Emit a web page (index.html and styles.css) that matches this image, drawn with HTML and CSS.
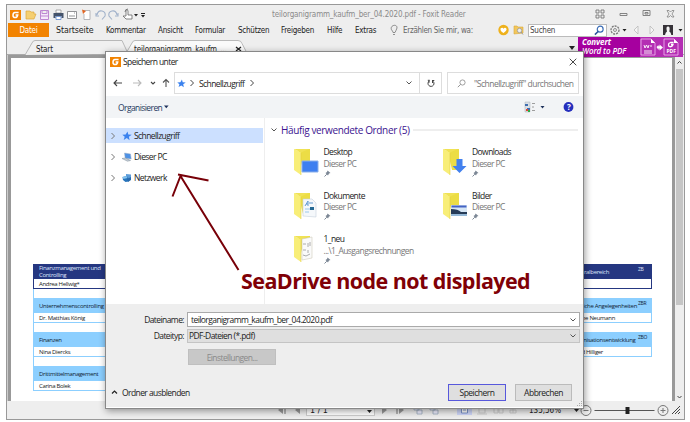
FILE: index.html
```html
<!DOCTYPE html>
<html lang="de">
<head>
<meta charset="utf-8">
<title>teilorganigramm_kaufm_ber_04.2020.pdf - Foxit Reader</title>
<link rel="stylesheet" href="styles.css">
</head>
<body>
<svg class="defs" width="0" height="0">
  <symbol id="chev" viewBox="0 0 6 8"><path d="M1.500 1 4.500 4l-3 3" fill="none" stroke="currentColor"/></symbol>
  <symbol id="down" viewBox="0 0 8 6"><path d="M1.500 1.500 4 4l2.500-2.500" fill="none" stroke="currentColor"/></symbol>
  <symbol id="star" viewBox="0 0 10 10"><path d="M5.500.5 6.300 3.500 9.700 3.800 6.900 5.700 7.600 9.200 4.800 7.100 1.700 8.900 2.700 5.700.3 3.800 3.700 3.500z" fill="#3b82ee"/></symbol>
  <symbol id="logo" viewBox="0 0 11 10"><path d="M0 0h11v10H0z" fill="#f28300"/><path d="M8.600 2.500H5Q3 2.800 3 5.200T5.200 7.600Q7.300 7.500 7.700 5.100H5.600" fill="none" stroke="#fff" stroke-width="1.500"/></symbol>
  <symbol id="pin" viewBox="0 0 7 7"><path d="M3.500.5 6.500 3 5 3.500 4 5.500 1.500 3 3 2z" fill="#7c8795"/><path d="M2.800 4.200.5 6.500" stroke="#7c8795"/></symbol>
  <symbol id="folder" viewBox="0 0 25 28"><path d="M4 1h12v21H9z" fill="#ecdd45"/><path d="M0 1l7 3.500V27l-7-5z" fill="#f8ee78"/><path d="M0 1h15L7 4.500z" fill="#f0e255"/><path d="M7 5v22" stroke="#e2cd45" stroke-width=".6"/></symbol>
</svg>
<div class="window">
  <header class="titlebar">
    <svg class="quick" viewBox="0 0 145 17">
      <use href="#logo" x="3" y="4" width="11" height="10"/>
      <path d="M19 13V5h4l1 1h3v2h2l-2 5z" fill="#f5cf72" stroke="#dca73e" stroke-width=".7"/>
      <path d="M33.500 4.500h8v9h-8zM35 4.500v3h5v-3M34 10h7" fill="#f5e8fa" stroke="#bd86d1"/>
      <path d="M49 4h5v3h-5z" fill="#fff" stroke="#777" stroke-width=".6"/><path d="M46.500 7h10v5h-2v-2h-6v2h-2z" fill="#44536b"/><path d="M49 10.500h5v3h-5z" fill="#fff" stroke="#4c79c5" stroke-width=".7"/>
      <path d="M60.500 5.500h9v7h-9zM62 10h6m-1-3h1" fill="#fff" stroke="#77797c" stroke-width=".8"/>
      <path d="M76 4.500h7v9h-6V8" fill="#fff" stroke="#a4a5aa" stroke-width=".8"/><path d="M75 3.500l4 1.500-3 3z" fill="#e16624"/>
      <path d="M89 7v3h3M90 9q1-5 5-4t3 5l-3 3.500" fill="none" stroke="#a0b1ca" stroke-width="1.100"/>
      <path d="M111 7v3h-3M110 9q-1-5-5-4t-3 5l3 3.500" fill="none" stroke="#a0b1ca" stroke-width="1.100"/>
      <path d="M119 10V4.500q1-1.500 2 0V9h4v4h-6l-3-3zM118 6q0-3 3-3" fill="#fff" stroke="#666" stroke-width=".8"/>
      <path d="M127 8h4l-2 2.500zM134 9h4l-2 2.500z" fill="#222"/><path d="M134 7.500h4" stroke="#222"/>
    </svg>
    <span class="t app-title">teilorganigramm_kaufm_ber_04.2020.pdf - Foxit Reader</span>
    <svg class="controls" viewBox="0 0 90 17"><g fill="none" stroke="#777" stroke-width=".9"><path d="M4 4h3v3H4zM9 4h3v3H9zM4 9h3v3H4zM9 9h3v3H9zM28 7.500h7v2h-7zM51 4.500h7v5h-7zM53 6.500h3V8h-3z"/><path d="M75 4.500h2l1.500 1.500L80 4.500h2L80 8l2 3h-2l-1.500-1.500L77 11h-2l2-3z" stroke-width=".7"/></g></svg>
  </header>
  <nav class="menu">
    <b class="file"><span class="t">Datei</span></b>
    <span class="t m-start">Startseite</span><span class="t m-kom">Kommentar</span><span class="t m-ans">Ansicht</span><span class="t m-form">Formular</span><span class="t m-sch">Schützen</span><span class="t m-frei">Freigeben</span><span class="t m-hilfe">Hilfe</span><span class="t m-ext">Extras</span>
    <svg class="bulb" viewBox="0 0 8 12"><path d="M3 8.500Q2.800 7 1.500 5.800C-.5 1 7.500-.5 7 4 6.800 5.800 5.300 7 5 8.500zM3 10.500h2" fill="none" stroke="#777" stroke-width=".8"/></svg>
    <span class="t m-tell">Erzählen Sie mir, wa:</span>
    <svg class="badges" viewBox="0 0 28 14"><circle cx="6.500" cy="7" r="5.200" fill="#eeb11c"/><path d="M3.500 5.500q2-1.500 3 .2 1.500-1.700 3 0Q10 7.500 6.500 10 3 8 3.500 5.500z" fill="#fff"/><path d="M17 11V3h3l1 1h5v6z" fill="#f2c65b" stroke="#d8a93b" stroke-width=".6"/><circle cx="22.500" cy="7.500" r="2.200" fill="#eee" stroke="#999" stroke-width=".8"/><path d="M24 9l2 2.500" stroke="#999"/></svg>
    <span class="search"><span class="t">Suchen</span><svg viewBox="0 0 12 12"><circle cx="7.300" cy="4.500" r="3.200" fill="#fff" stroke="#386bb5" stroke-width="1.300"/><path d="M5 7 1.500 10.500" stroke="#284f9a" stroke-width="1.600"/></svg></span>
    <svg class="account" viewBox="0 0 77 14"><circle cx="8" cy="7" r="4" fill="none" stroke="#777" stroke-width="1.300" stroke-dasharray="2 1"/><circle cx="8" cy="7" r="1.500" fill="none" stroke="#777" stroke-width=".8"/><path d="M15.500 6h4l-2 2.500zM71.500 6h4l-2 2.500z" fill="#222"/><path d="M31 3v8l-4-4zM43 3v8l4-4z" fill="#f5f5f5" stroke="#b9b9b9" stroke-width=".8"/><path d="M56 2h10v10H56z" fill="#363238"/><path d="M58 12q.5-3 2-3.500-1.500-5 1-5t1.300 5q1.700.5 2 3.500z" fill="#f6f6f6"/></svg>
  </nav>
  <div class="tabs">
    <svg class="tabshape" viewBox="0 0 560 20"><path d="M8 18l7-12q1-2.500 3-2.500h87l6 13" fill="#f0f0f0" stroke="#aaa" stroke-width=".8"/><path d="M108 18l7-12q1-2.500 3-2.500h103q3 0 4 3l6 11.500" fill="#fafafa" stroke="#aaa" stroke-width=".8"/><path d="M219 10l5 4m0-4-5 4" stroke="#222" stroke-width="1.300"/></svg>
    <span class="t tab-a">Start</span><span class="t tab-b">teilorganigramm_kaufm_...</span>
    <svg class="arrow" viewBox="0 0 8 6"><path d="M1 1h6L4 5z" fill="#222"/></svg>
    <aside class="promo"><div><span class="t p1">Convert</span><span class="t p2">Word to PDF</span></div>
      <svg viewBox="0 0 43 20"><path d="M1 2h10l4 4v12H1zM24 2h10l4 4v12H24z" fill="#b42eb3" stroke="#f2bdf2" stroke-width=".8"/><path d="M11 2l4 4h-4zM34 2l4 4h-4z" fill="#fff"/><path d="M4 8l1 3 1.500-3L8 11l1-3M10 9h2M4 14h8M4 16h8" fill="none" stroke="#fff" stroke-width=".9"/><path d="M16.500 10l2-2v1.300h1V7.500l3.500 3-3.500 3v-2h-1V13z" fill="#fff"/><path d="M33.500 5.500h-3q-3 1-1.500 4 3 1 4-2h-2" fill="none" stroke="#fff" stroke-width="1.300"/><text x="31.200" y="16.300" class="pdf">PDF</text></svg>
    </aside>
  </div>
  <main class="workspace">
    <div class="page">
      <section class="org left">
        <article class="dark"><h3>Finanzmanagement und<br>Controlling</h3><p>Andrea Hellwig*</p></article>
        <article><h3>Unternehmenscontrolling</h3><p>Dr. Matthias König</p></article>
        <article><h3>Finanzen</h3><p>Nina Diercks</p></article>
        <article><h3>Drittmittelmanagement</h3><p>Carina Bolek</p></article>
      </section>
      <section class="org right">
        <article class="dark"><h3 class="e1">ralbereich<sup>ZB</sup></h3><p></p></article>
        <article><h3 class="e2">tliche Angelegenheiten<sup>ZBR</sup></h3><p class="e3">tine Neumann</p></article>
        <article><h3 class="e4">nisationsentwicklung<sup>ZBO</sup></h3><p class="e5">d Hilliger</p></article>
      </section>
    </div>
    <div class="scroll"><svg viewBox="0 0 7 14"><path d="M1.500 8.500l2-2 2 2" fill="none" stroke="#444"/></svg><i></i><svg viewBox="0 0 7 14"><path d="M1.500 9l2 2 2-2" fill="none" stroke="#444"/></svg></div>
  </main>
  <footer class="status">
    <svg class="pager-l" viewBox="0 0 30 12"><path d="M7 2v8L2 6zM24 2v8l-5-4z" fill="#999"/><path d="M9 2v8" stroke="#999" stroke-width="1.400"/></svg>
    <span class="pageno"><span class="t">1 / 1</span><svg viewBox="0 0 6 5"><path d="M0 1h5L2.500 4z" fill="#222"/></svg></span>
    <svg class="pager-r" viewBox="0 0 60 12"><path d="M5 2v8l5-4zM22 2v8l5-4z" fill="#999"/><path d="M20 2v8" stroke="#999" stroke-width="1.400"/><path d="M37 2h5v4h-5zM40 6h5v4h-5zM53 2h5v4h-5zM56 6h5v4h-5z" fill="#eef" stroke="#9ab" stroke-width=".8"/></svg>
    <svg class="views" viewBox="0 0 64 12"><path d="M0 0h15v11H0z" fill="#cdd5f8"/><path d="M4.500 2h6v7h-6zM6 4h3M6 6h3" fill="#fff" stroke="#6380c0" stroke-width=".8"/><path d="M22 2v7h6V2M20 10h10M37 2h4v7h-4zM42 2h4v7h-4zM56 2v7M53 9V6h6v3z" fill="none" stroke="#ccc" stroke-width="1"/></svg>
    <span class="t zoomval">135,56%</span>
    <svg class="slider" viewBox="0 0 110 14"><path d="M0 5h5L2.500 8z" fill="#222"/><g fill="none" stroke="#777"><circle cx="12" cy="6.500" r="5"/><path d="M9.500 6.500h5M86.500 6.500h5M89 4v5"/><circle cx="89" cy="6.500" r="5"/></g><path d="M20.500 6.500h60" stroke="#555"/><path d="M51.500 3h4v7h-4z" fill="#222"/><path d="M98 10l8-8m-5 8 5-5m-2 5 2-2" stroke="#444" stroke-width="1"/></svg>
  </footer>
</div>

<div class="dialog">
  <div class="d-title"><svg class="d-logo"><use href="#logo"/></svg><span class="t d-name">Speichern unter</span><svg class="close" viewBox="0 0 8 8"><path d="M.7.7l6.600 6.600m0-6.600L.7 7.300" stroke="#333" stroke-width=".9"/></svg></div>
  <div class="d-nav">
    <svg class="arrows" viewBox="0 0 62 12"><g fill="none" stroke="#444" stroke-width="1.100"><path d="M4 6h8M7 3 4 6l3 3"/><path d="M23 6h8m-3-3 3 3-3 3" stroke="#bbb"/><path d="M41 5l2 2 2-2"/><path d="M56 10V2.500M53 5.500l3-3 3 3" stroke="#555"/></g></svg>
    <div class="address"><svg class="st"><use href="#star"/></svg><svg class="ch"><use href="#chev"/></svg><span class="t d-path">Schnellzugriff</span><svg class="ch"><use href="#chev"/></svg><svg class="dn"><use href="#down"/></svg><span class="reload"><svg viewBox="0 0 8 9"><path d="M2 1.500v2.300M.8 1.300h2M5.500 1.800A3 3 0 1 1 2.200 2M5.500 1.800V4M5 1.500h2.300" fill="none" stroke="#444"/></svg></span></div>
    <div class="find"><svg viewBox="0 0 9 9"><circle cx="5.500" cy="3.500" r="2.600" fill="none" stroke="#888" stroke-width=".8"/><path d="M3.600 5.400.8 8.200" stroke="#888" stroke-width=".9"/></svg><span class="t">"Schnellzugriff" durchsuchen</span></div>
  </div>
  <div class="d-tools"><span class="t organize">Organisieren</span><svg class="tri" viewBox="0 0 5 4"><path d="M0 .5h4.600L2.300 3.300z" fill="#1e315b"/></svg>
    <svg class="viewicons" viewBox="0 0 54 14"><path d="M4 2h5v10H4z" fill="#d9dfe6" stroke="#aab1b7" stroke-width=".5"/><path d="M4 4h3v2H4zM6 8h3v2H6z" fill="#3e6eaf"/><path d="M5 9h2v2H5z" fill="#e24536"/><path d="M7 10h2v2H7z" fill="#2eae47"/><path d="M11 3.500h3M11 7h2M11 10.500h3" stroke="#888" stroke-width=".8"/><path d="M19.500 6h4l-2 2.500z" fill="#1e315b"/><circle cx="47.500" cy="7" r="4.900" fill="#252fbd"/><text x="47.500" y="10" class="help">?</text></svg>
  </div>
  <div class="d-body">
    <aside class="tree">
      <div class="node on"><svg class="ch"><use href="#chev"/></svg><svg class="ni"><use href="#star"/></svg><span class="t n1">Schnellzugriff</span></div>
      <div class="node"><svg class="ch"><use href="#chev"/></svg><svg class="ni" viewBox="0 0 10 10"><path d="M2.500 1l6 1 .7 5-6-.8z" fill="#4d91e5" stroke="#9dafc4" stroke-width=".5"/><path d="M0 6.500l3.500-.5 5 2.500-3 .7z" fill="#c4cdd6" stroke="#7d8c9a" stroke-width=".5"/></svg><span class="t n2">Dieser PC</span></div>
      <div class="node"><svg class="ch"><use href="#chev"/></svg><svg class="ni" viewBox="0 0 10 10"><path d="M4 1l5 .5v5L4 6z" fill="#5d9cd9"/><path d="M.5 4l4-1 2 2v3.500L3.500 9 1 7z" fill="#2875bc"/><path d="M.5 4l4-1 1 2-4 1z" fill="#85c4ef"/><path d="M5 6l4-2v3L6 9z" fill="#2769ac"/></svg><span class="t n3">Netzwerk</span></div>
    </aside>
    <section class="files">
      <h2><svg class="dn"><use href="#down"/></svg><span class="t">Häufig verwendete Ordner (5)</span><i></i></h2>
      <div class="grid">
        <div class="item"><svg class="fo" viewBox="0 0 25 28"><use href="#folder"/><path d="M8 13h16v11H8z" fill="#3e7ff0" stroke="#8aafe9"/></svg><div><b class="t">Desktop</b><span class="t">Dieser PC</span><svg class="pin"><use href="#pin"/></svg></div></div>
        <div class="item"><svg class="fo" viewBox="0 0 25 28"><use href="#folder"/><path d="M13.500 11h6v7h4l-7 7-7-7h4z" fill="#4381ee"/></svg><div><b class="t">Downloads</b><span class="t">Dieser PC</span><svg class="pin"><use href="#pin"/></svg></div></div>
        <div class="item"><svg class="fo" viewBox="0 0 25 28"><use href="#folder"/><path d="M9 7h9l4 4v14L9 24z" fill="#f5f8fb" stroke="#c6d1dd" stroke-width=".6"/><path d="M11 14l3-5v5m-2-2h2M15 11h4" fill="none" stroke="#649bd2"/><path d="M11 17h9m-9 3h4" stroke="#9ac8ec"/><path d="M16 15h4v3h-4z" fill="#256994"/></svg><div><b class="t">Dokumente</b><span class="t">Dieser PC</span><svg class="pin"><use href="#pin"/></svg></div></div>
        <div class="item"><svg class="fo" viewBox="0 0 25 28"><use href="#folder"/><path d="M8 13h16v11H8z" fill="#d6e6f5"/><path d="M8.500 13.500h15v2h-15z" fill="#4563c3"/><path d="M8 17q7 0 10 3h6v2H8z" fill="#263b57"/><path d="M8 22h16v2H8z" fill="#94b8d7"/></svg><div><b class="t">Bilder</b><span class="t">Dieser PC</span><svg class="pin"><use href="#pin"/></svg></div></div>
        <div class="item"><svg class="fo" viewBox="0 0 25 28"><use href="#folder"/><path d="M8 4l10-2v21L8 25z" fill="#fafafa" stroke="#d1cdbc" stroke-width=".6"/><path d="M9 9h3m2-1v4m2-5v4M9 15h3m2 0v3M9 20l3 1 4-2" fill="none" stroke="#999" stroke-width=".8"/></svg><div><b class="t">1_neu</b><span class="t">...\1_Ausgangsrechnungen</span><svg class="pin"><use href="#pin"/></svg></div></div>
      </div>
    </section>
  </div>
  <div class="d-foot">
    <label class="row"><span class="t lab">Dateiname:</span><span class="field"><span class="t f1">teilorganigramm_kaufm_ber_04.2020.pdf</span><svg class="dn"><use href="#down"/></svg></span></label>
    <label class="row"><span class="t lab">Dateityp:</span><span class="field gray"><span class="t f2">PDF-Dateien (*.pdf)</span><svg class="dn"><use href="#down"/></svg></span></label>
    <div class="settings"><span class="t">Einstellungen...</span></div>
    <div class="actions"><svg class="up" viewBox="0 0 7 6"><path d="M1 4.500 3.500 2 6 4.500" fill="none" stroke="#222" stroke-width="1.200"/></svg><span class="t hide">Ordner ausblenden</span><button class="primary">Speichern</button><button>Abbrechen</button></div>
    <svg class="grip" viewBox="0 0 6 6"><path d="M4 0h1v1H4zM2 2h1v1H2zM4 2h1v1H4zM0 4h1v1H0zM2 4h1v1H2zM4 4h1v1H4z" fill="#aaa"/></svg>
  </div>
</div>
<svg class="annotation" viewBox="0 0 64 96"><path d="M62.500 95 4.500 1M2-.5l30.500 6M4.500 1l-8 20.500" fill="none" stroke="#780008" stroke-width="2"/></svg>
<div class="note t">SeaDrive node not displayed</div>
</body>
</html>
```

FILE: styles.css
```css
* { box-sizing: border-box; }
body { margin: 0; width: 690px; height: 422px; overflow: hidden; background: #fff; position: relative; font: 8.5px/11px "Open Sans", sans-serif; color: #222; }
svg { display: block; flex: none; overflow: visible; }
.defs { position: absolute; }
.t { white-space: pre; flex: none; }
b { font-weight: 400; }

.window { width: 679px; height: 416px; margin-left: 6px; position: relative; top: 4px; border: 1px solid #999; border-width: 1.5px 1px; background: #eee; display: flex; flex-direction: column; font-family: "DejaVu Sans Condensed", "DejaVu Sans", sans-serif; }
.titlebar { height: 18px; display: flex; align-items: center; flex: none; }
.quick { width: 145px; height: 17px; }
.app-title { margin-left: 120px; width: 195px; color: #8a8a8a; font-size: 8px; letter-spacing: -.14px; }
.controls { width: 90px; height: 17px; margin-left: 125px; }
.menu { height: 14px; display: flex; align-items: center; flex: none; font-size: 8px; letter-spacing: -.25px; }
.file { width: 41px; height: 14px; margin-left: 1px; background: #f28300; color: #fff; display: grid; place-items: center; }
.m-start { width: 50px; margin-left: 7px; font-size: 8.8px; letter-spacing: -.1px; }
.m-kom { width: 52px; }
.m-ans { width: 37px; }
.m-form { width: 43px; }
.m-sch { width: 43px; }
.m-frei { width: 46px; }
.m-hilfe { width: 28px; }
.m-ext { width: 35px; }
.bulb { width: 8px; height: 12px; }
.m-tell { margin-left: 5px; width: 71px; color: #666; letter-spacing: -.3px; }
.badges { width: 28px; height: 14px; margin-left: 23px; }
.search { width: 79px; height: 13px; margin-left: 3px; border: 1px solid #bbb; background: #fff; display: flex; align-items: center; justify-content: space-between; padding: 0 1px; color: #444; }
.search svg { width: 12px; height: 11px; }
.account { width: 77px; height: 14px; }
.tabs { height: 18px; display: flex; flex: none; position: relative; border-bottom: 1px solid #aaa; }
.tabshape { position: absolute; left: 10px; top: 0; width: 560px; height: 20px; }
.tab-a, .tab-b { position: relative; padding-top: 7px; font-size: 8px; letter-spacing: -.15px; }
.tab-a { margin-left: 29px; width: 98px; }
.tab-b { width: 434px; }
.arrow { width: 8px; height: 6px; margin-top: 8px; }
.promo { width: 105px; height: 20px; margin-left: 2px; background: #a6009f; color: #fff; display: flex; flex: none; font: italic 8px/8.5px "Open Sans", sans-serif; letter-spacing: -.1px; padding: 1px 0 0 4px; position: relative; }
.promo div { width: 58px; display: flex; flex-direction: column; }
.p1 { font-weight: 700; height: 8.5px; }
.p2 { font-weight: 600; }
.promo svg { width: 43px; height: 20px; margin-top: -1px; background: #b42eb3; }
.pdf { font: 700 5px "Open Sans", sans-serif; fill: #fff; text-anchor: middle; }
.workspace { height: 346px; display: flex; flex: none; border-left: 1px solid #ccc; }
.page { width: 667px; border: 3px solid #999; border-bottom: 0; background: #fff; padding: 206px 20px 0 22px; display: flex; justify-content: space-between; }
.scroll { width: 7px; margin-left: 1px; display: flex; flex-direction: column; background: #eee; }
.scroll svg { width: 7px; height: 14px; }
.scroll i { height: 236px; background: #c5c5c5; margin-bottom: 82px; }
.org { width: 105px; font: 6px/7px "Open Sans", sans-serif; letter-spacing: -.32px; }
.org article { height: 25px; margin-bottom: 9px; border: 1px solid #8ccfff; }
.left { height: 127px; border-left: 1px solid #8ccfff; }
.left article { border-left: 0; }
.left .dark { border-left: 1px solid #253781; margin-left: -1px; }
.org h3 { margin: 0; height: 14px; font: inherit; background: #8ccfff; display: flex; align-items: center; padding-left: 5px; color: #123; white-space: nowrap; position: relative; }
.org p { margin: 0; padding: 1.500px 5px; white-space: nowrap; }
.org .dark { border-color: #253781; }
.org .dark h3 { background: #253781; color: #dfe5fa; }
.right { width: 105px; }
.right h3 { justify-content: flex-end; }
.right sup { position: absolute; right: 0; top: 1px; width: 13px; font-size: 5px; line-height: 6px; text-align: left; }
.right p { text-align: right; }
.right .e1 { padding-right: 42px; }
.right .e2 { padding-right: 14px; }
.right .e3 { padding-right: 36px; }
.right .e4 { padding-right: 15.5px; }
.right .e5 { padding-right: 48px; }
.status { flex: 1; display: flex; align-items: flex-start; background: #eee; }
.pager-l { width: 30px; height: 12px; margin: 3px 0 0 269px; }
.pageno { width: 73px; height: 12px; margin: 3px 0 0 0; border: 1px solid #ccc; background: #fff; display: flex; justify-content: space-between; align-items: center; padding: 2px 1px 0 3px; font: 8px/10px "DejaVu Sans", sans-serif; }
.pageno svg { width: 6px; height: 5px; }
.pager-r { width: 60px; height: 12px; margin: 3px 0 0 2px; }
.views { width: 64px; height: 12px; margin: 3px 0 0 20px; }
.zoomval { margin: 4px 0 0 8px; width: 43px; font-size: 8px; }
.slider { width: 110px; height: 14px; margin-top: 3px; margin-left: 2px; }

.dialog { position: absolute; left: 105px; top: 51px; width: 479px; height: 357.5px; border: 1px solid #888; background: #fff; box-shadow: 1px 2px 7px rgba(0,0,0,.4); letter-spacing: -.58px; }
.d-title { height: 19px; display: flex; align-items: center; }
.d-logo { width: 11px; height: 10px; margin-left: 4px; }
.d-name { margin-left: 2px; width: 60px; }
.close { width: 8px; height: 8px; margin-left: auto; margin-right: 6px; }
.d-nav { height: 25px; display: flex; align-items: center; padding-bottom: 1px; }
.arrows { width: 62px; height: 12px; margin-left: 4px; }
.address { width: 268px; height: 22px; margin-left: 2px; border: 1px solid #ddd; display: flex; align-items: center; }
.st { width: 9px; height: 9px; margin-left: 2px; margin-right: 3px; }
.ch { width: 6px; height: 8px; color: #444; }
.d-path { width: 50px; margin-left: 4px; }
.dn { width: 8px; height: 6px; color: #555; }
.address .dn { margin-left: auto; margin-right: 6px; }
.reload { width: 22px; height: 20px; border-left: 1px solid #ddd; display: grid; place-items: center; }
.reload svg { width: 8px; height: 9px; }
.find { width: 132px; height: 22px; margin-left: 5px; border: 1px solid #ddd; display: flex; align-items: center; color: #777; letter-spacing: -.52px; }
.find svg { width: 9px; height: 9px; margin: 0 8px 0 9px; }
.d-tools { height: 22px; background: #f2f4f6; display: flex; align-items: center; color: #26395f; }
.organize { margin-left: 12px; width: 46px; }
.tri { width: 5px; height: 4px; }
.viewicons { width: 54px; height: 14px; margin-left: 351.5px; }
.help { font: 700 8px "Open Sans", sans-serif; fill: #fff; text-anchor: middle; }
.d-body { height: 186px; display: flex; }
.tree { width: 159px; padding-top: 10px; border-right: 1px solid #eee; }
.node { width: 157px; height: 15px; margin-bottom: 6px; display: flex; align-items: center; }
.node .ch { color: #777; margin-left: 4px; }
.node.on { background: #cce0ff; }
.ni { width: 10px; height: 10px; margin: 0 2px 0 6px; }
.files { flex: 1; min-width: 0; }
.files h2 { margin: 6px 5px 0 5px; height: 12px; display: flex; align-items: center; font-size: 10px; letter-spacing: -.36px; font-weight: 400; color: #3c1490; }
.files h2 .t { margin-left: 3px; width: 132px; }
.files h2 i { height: 2px; background: #eee; flex: 1; }
.grid { display: grid; grid-template-columns: 148.5px 148.5px; grid-auto-rows: 43.5px; padding: 10px 0 0 29px; }
.item { display: flex; }
.fo { width: 25px; height: 28px; margin: 2px 4.5px 0 0; }
.item b, .item span { display: block; }
.item span { color: #777; margin-top: .5px; }
.pin { width: 7px; height: 7px; margin-top: 1px; }
.d-foot { height: 102.5px; background: #eee; padding-top: 8px; position: relative; }
.row { display: flex; align-items: center; height: 15px; margin-bottom: 1px; }
.lab { width: 78px; text-align: right; }
.field { width: 393px; height: 15px; margin-left: 3px; border: 1px solid #aaa; background: #fff; display: flex; align-items: center; justify-content: space-between; padding: 0 2px 0 3px; }
.field.gray { height: 14px; background: #dfdfdf; border-color: #c4c4c4; padding-left: 1px; }
.settings { width: 88px; height: 16px; margin: 6px 0 0 82px; background: #c8c8c8; border: 1px solid #bfbfbf; color: #8a8a8a; display: grid; place-items: center; }
.actions { display: flex; align-items: center; margin-top: 18px; height: 18px; }
.up { width: 7px; height: 6px; margin-left: 5px; }
.hide { margin-left: 4px; width: 219px; }
button { height: 17px; width: 57px; padding: 0; border: 1px solid #bbb; background: #dfdfdf; font: inherit; letter-spacing: -.5px; color: #222; margin-left: 9px; }
.hide + button { width: 58px; margin-left: 107px; border: 1.5px solid #5758dc; }
.grip { position: absolute; right: 0; bottom: 0; width: 6px; height: 6px; }
.annotation { position: absolute; left: 176px; top: 175px; width: 64px; height: 96px; }
.note { position: absolute; left: 241px; top: 268px; font: 700 21.5px/26px "Open Sans", sans-serif; letter-spacing: -.57px; color: #800006; }
```
